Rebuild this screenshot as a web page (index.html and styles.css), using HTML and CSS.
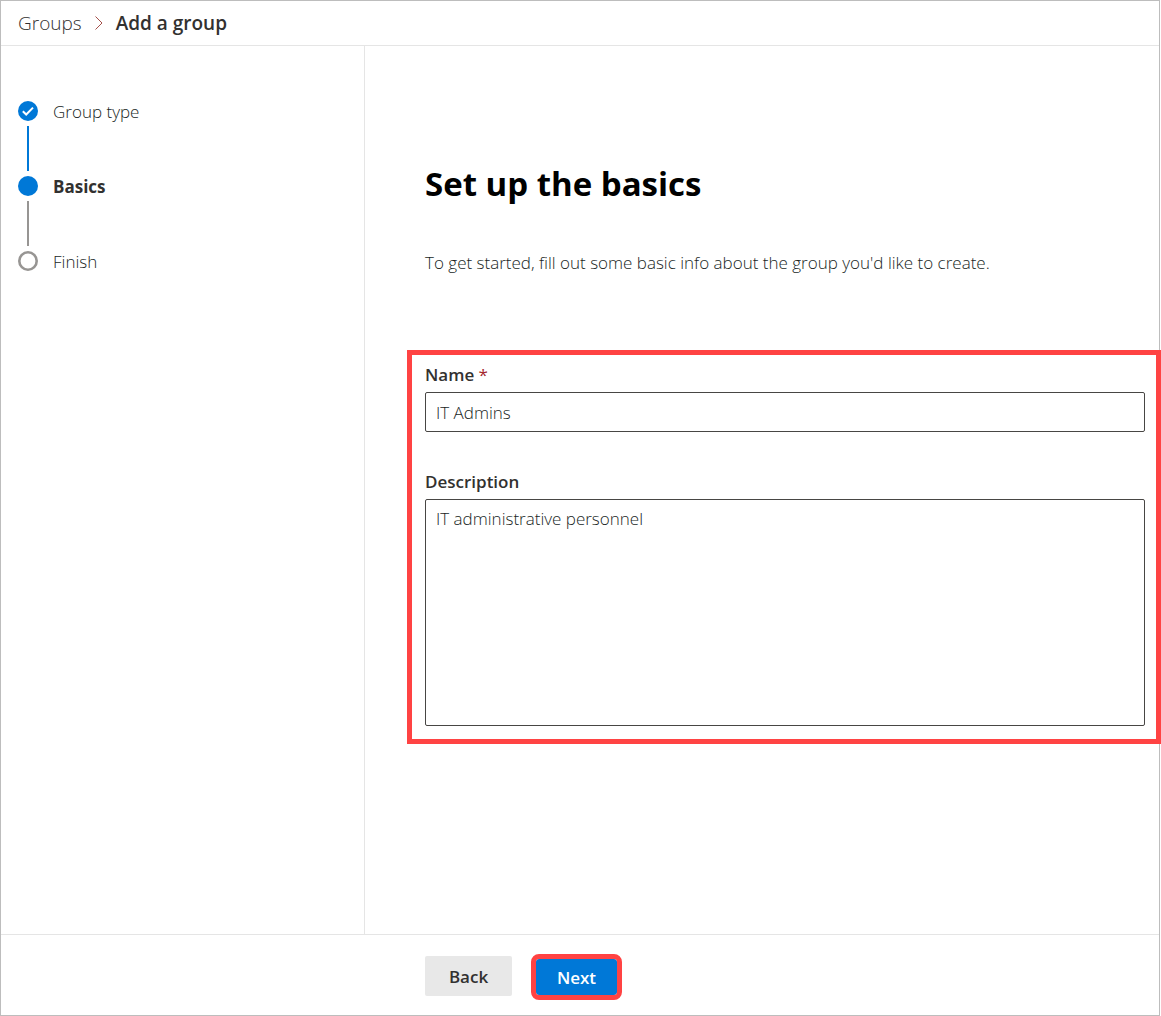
FILE: index.html
```html
<!DOCTYPE html>
<html lang="en">
<head>
<meta charset="utf-8">
<title>Add a group</title>
<link rel="stylesheet" href="styles.css">
</head>
<body>
<div class="panel">
  <nav class="breadcrumb" aria-label="Breadcrumb">
    <a class="crumb" href="#">Groups</a>
    <svg class="chevron" width="8" height="14" viewBox="0 0 8 14" aria-hidden="true"><path d="M0.5 0.5L7 7L0.5 13.5"/></svg>
    <span class="crumb-current" aria-current="page">Add a group</span>
  </nav>
  <div class="body">
    <aside class="sidebar">
      <ol class="steps">
        <li class="step done">
          <svg class="marker" width="20" height="20" viewBox="0 0 20 20" aria-hidden="true"><circle class="fill" cx="10" cy="10" r="10"/><path class="check" d="M4.8 10.3L8.2 13.5L15 6.6"/></svg>
          <span>Group type</span>
        </li>
        <li class="step current" aria-current="step">
          <svg class="marker" width="20" height="20" viewBox="0 0 20 20" aria-hidden="true"><circle class="fill" cx="10" cy="10" r="10"/></svg>
          <span>Basics</span>
        </li>
        <li class="step">
          <svg class="marker" width="20" height="20" viewBox="0 0 20 20" aria-hidden="true"><circle class="ring" cx="10" cy="10" r="8.7"/></svg>
          <span>Finish</span>
        </li>
      </ol>
    </aside>
    <main class="content">
      <h1 class="title">Set up the basics</h1>
      <p class="intro">To get started, fill out some basic info about the group you'd like to create.</p>
      <form class="fields" id="basics">
        <div class="field">
          <label class="label" for="name">Name <span class="required">*</span></label>
          <input class="control" id="name" type="text" value="IT Admins" required>
        </div>
        <div class="field">
          <label class="label" for="description">Description</label>
          <textarea class="control area" id="description">IT administrative personnel</textarea>
        </div>
      </form>
    </main>
  </div>
  <footer class="footer">
    <button class="button" type="button">Back</button>
    <button class="button primary" type="submit" form="basics">Next</button>
  </footer>
</div>
</body>
</html>
```
FILE: styles.css
```css
* {
  box-sizing: border-box;
}

body {
  margin: 0;
  padding-right: 1px;
  background: #fff;
  color: #201f1e;
  font: 300 17px/24px "Open Sans", "Noto Sans", sans-serif;
}

.panel {
  display: flex;
  flex-direction: column;
  min-height: 100vh;
  border: 1px solid #bdbdbd;
}

.breadcrumb {
  display: flex;
  align-items: center;
  gap: 13px;
  padding: 8px 17px;
  border-bottom: 1px solid #e5e5e5;
  font-size: 19px;
  line-height: 28px;
}

.crumb {
  color: #323130;
  text-decoration: none;
}

.crumb-current {
  color: #323130;
  font-weight: 600;
}

.chevron {
  fill: none;
  stroke: #a4504a;
}

.body {
  display: flex;
  flex: 1;
}

.sidebar {
  flex: 0 0 364px;
  padding: 53px 17px;
  border-right: 1px solid #e5e5e5;
}

.steps {
  margin: 0;
  padding: 0;
  list-style: none;
}

.step {
  display: grid;
  grid-template-columns: 20px 1fr;
  grid-template-rows: 24px 51px;
  column-gap: 15px;
  align-items: center;
}

.step span {
  padding-top: 2px;
}

.step:not(:last-child)::after {
  content: "";
  width: 2px;
  height: 45px;
  justify-self: center;
  background: #979593;
}

.step.done::after {
  background: #0078d7;
}

.step.current {
  color: #323130;
  font-weight: 700;
}

.fill {
  fill: #0078d7;
}

.check {
  fill: none;
  stroke: #fff;
  stroke-width: 2;
}

.ring {
  fill: #fff;
  stroke: #979593;
  stroke-width: 2.6;
}

.content {
  flex: 1;
  min-width: 0;
  padding: 114px 14px 40px 60px;
}

.title {
  margin: 0;
  color: #000;
  font-size: 33px;
  line-height: 48px;
  font-weight: 700;
}

.intro {
  margin: 43px 0 75px;
}

.fields {
  display: grid;
  gap: 38px;
  margin: 0 -16px 0 -18px;
  padding: 8px 11px 13px 13px;
  border: 5px solid #ff4343;
}

.field {
  display: grid;
  gap: 5px;
}

.label {
  color: #323130;
  font-weight: 600;
}

.required {
  color: #a4262c;
  font-weight: 400;
}

.control {
  display: block;
  width: 100%;
  height: 40px;
  margin: 0;
  padding: 0 10px;
  border: 1px solid #484644;
  border-radius: 2px;
  outline: none;
  background: #fff;
  color: inherit;
  font: inherit;
}

.area {
  height: 227px;
  padding: 7px 10px;
  resize: none;
}

.footer {
  display: flex;
  align-items: flex-end;
  gap: 24px;
  padding: 21px 14px 19px 424px;
  border-top: 1px solid #e5e5e5;
}

.button {
  min-width: 87px;
  height: 40px;
  padding: 2px 16px 0;
  border: 0;
  border-radius: 2px;
  background: #e8e8e8;
  color: #323130;
  font: inherit;
  font-weight: 600;
}

.primary {
  min-width: 81px;
  height: 36px;
  margin-bottom: 1px;
  border-radius: 3px;
  outline: 5px solid #ff4343;
  background: #0078d7;
  color: #fff;
}
```
